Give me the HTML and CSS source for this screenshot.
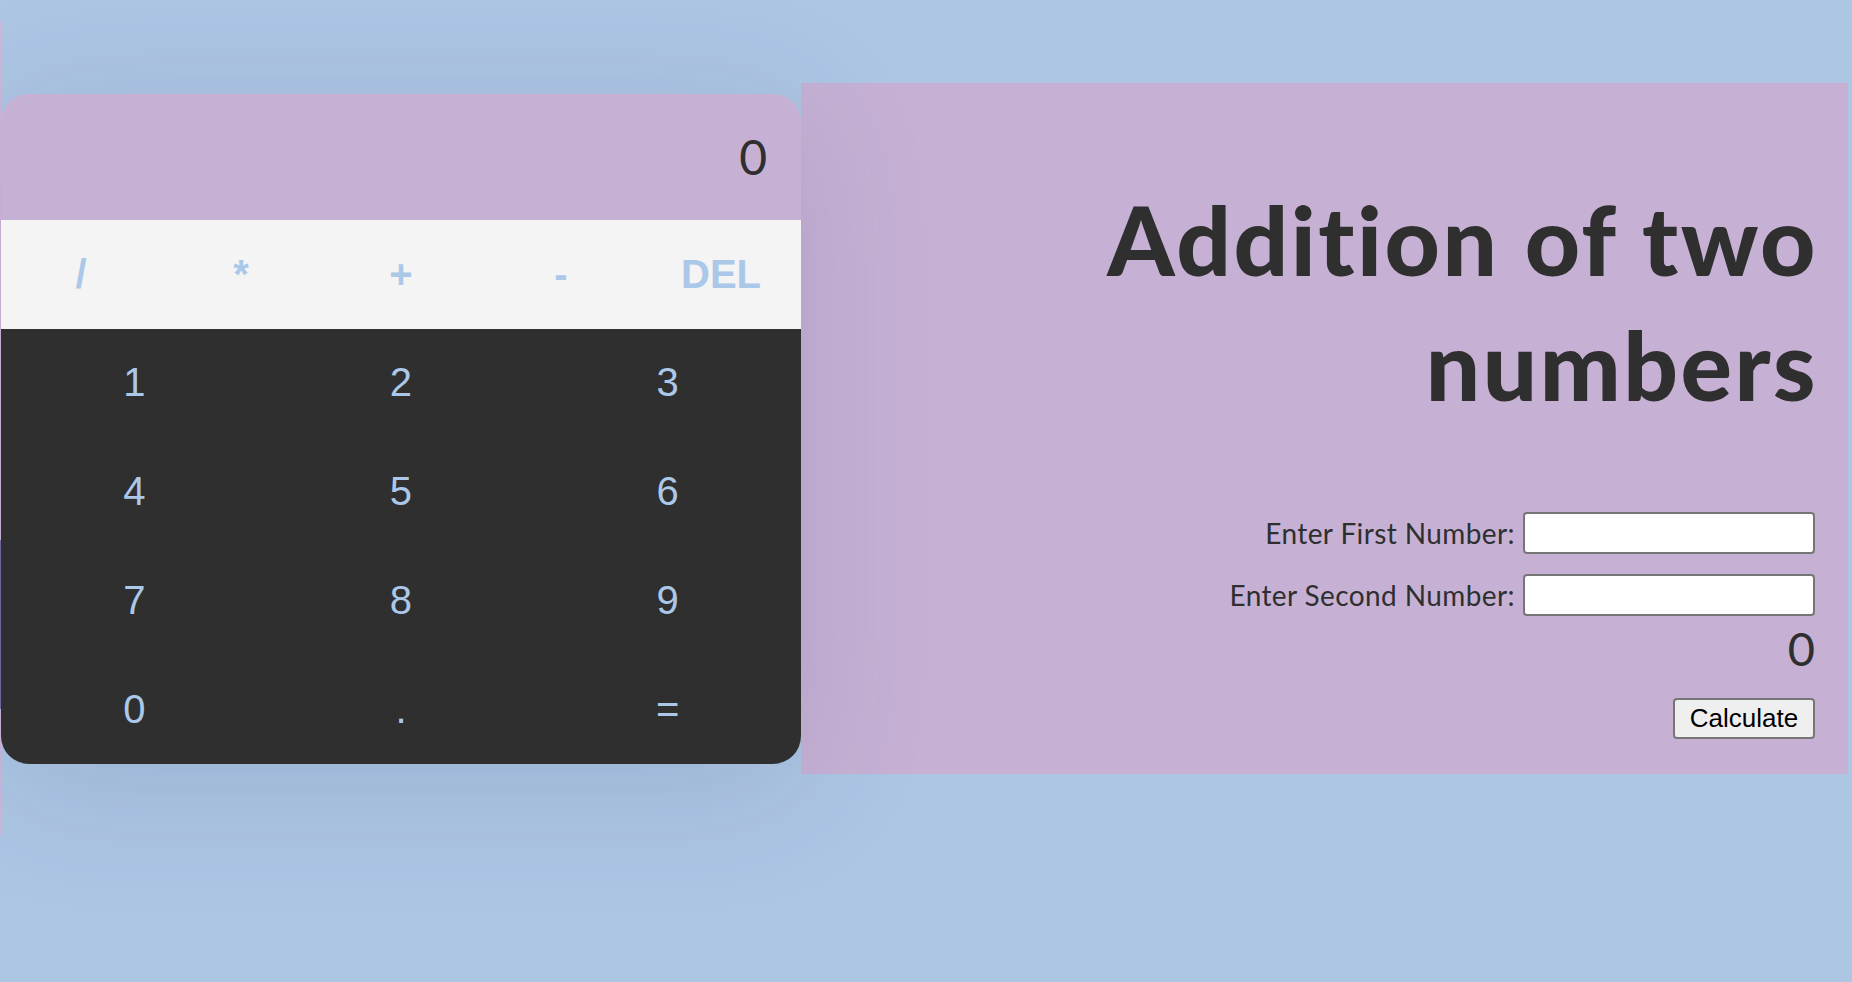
FILE: index.html
```html
<!DOCTYPE html>
<html lang="en">
<head>
<meta charset="utf-8">
<title>Calculator</title>
<link rel="stylesheet" href="styles.css">
</head>
<body>
<div class="edge"><span class="edge-band"></span></div>
<main class="page">
  <section class="calc">
    <div class="display">0</div>
    <div class="ops">
      <button class="op">/</button>
      <button class="op">*</button>
      <button class="op">+</button>
      <button class="op">-</button>
      <button class="op">DEL</button>
    </div>
    <div class="keys">
      <button class="key">1</button>
      <button class="key">2</button>
      <button class="key">3</button>
      <button class="key">4</button>
      <button class="key">5</button>
      <button class="key">6</button>
      <button class="key">7</button>
      <button class="key">8</button>
      <button class="key">9</button>
      <button class="key">0</button>
      <button class="key">.</button>
      <button class="key">=</button>
    </div>
  </section>
  <section class="panel">
    <h1 class="title">Addition of two<br>numbers</h1>
    <form class="adder">
      <div class="row">
        <label class="label" for="n1">Enter First Number:</label>
        <input class="field" id="n1" type="text">
      </div>
      <div class="row">
        <label class="label" for="n2">Enter Second Number:</label>
        <input class="field" id="n2" type="text">
      </div>
      <div class="result">0</div>
      <button class="calc-btn" type="button">Calculate</button>
    </form>
  </section>
</main>
</body>
</html>
```

FILE: styles.css
```css
* { box-sizing: border-box; }

html, body {
  margin: 0;
  padding: 0;
}

body {
  background: #adc6e4;
  min-height: 982px;
  position: relative;
  font-family: "Lato", "Liberation Sans", sans-serif;
  font-variant-ligatures: none;
  overflow: hidden;
}

.edge {
  position: absolute;
  left: 0;
  top: 21px;
  width: 1px;
  height: 813px;
  background: #d2b4da;
}

.edge-band {
  position: absolute;
  left: 0;
  top: 519px;
  width: 1px;
  height: 169px;
  background: #7469a6;
}

.page {
  display: flex;
  align-items: center;
  padding: 83px 4px 0 1px;
}

.calc {
  width: 800px;
  flex: none;
  border-radius: 28px;
  overflow: hidden;
  box-shadow: 0 20px 140px rgba(40, 60, 90, 0.14);
  position: relative;
  z-index: 1;
}

.display {
  height: 126px;
  background: #c6b1d5;
  display: flex;
  align-items: center;
  justify-content: flex-end;
  padding-right: 34px;
  font-family: "Lato", sans-serif;
  font-size: 48px;
  color: #2f2f2f;
}

.ops {
  height: 109px;
  background: #f4f4f4;
  display: grid;
  grid-template-columns: repeat(5, 1fr);
}

.op, .key {
  border: 0;
  background: transparent;
  padding: 0;
  margin: 0;
  font-family: "Liberation Sans", Arial, sans-serif;
  color: #abc8e8;
  font-size: 40px;
  cursor: pointer;
}

.op {
  font-weight: 700;
}

.keys {
  height: 435px;
  background: #2f2f2f;
  display: grid;
  grid-template-columns: repeat(3, 1fr);
  grid-template-rows: repeat(4, 1fr);
}

.panel {
  width: 1047px;
  height: 691px;
  flex: none;
  background: #c6b1d5;
  padding: 93px 33px 0 0;
  text-align: right;
}

.title {
  margin: 0 -3px 0 0;
  font-family: "Lato", sans-serif;
  font-weight: 900;
  font-size: 96px;
  line-height: 125px;
  letter-spacing: 2.5px;
  color: #2f2f2f;
}

.adder {
  display: flex;
  flex-direction: column;
  align-items: flex-end;
  margin-top: 86px;
}

.row {
  display: flex;
  align-items: center;
  gap: 8px;
  margin-bottom: 20px;
}

.label {
  font-family: "Lato", sans-serif;
  font-size: 28px;
  letter-spacing: 0.4px;
  color: #2f2f2f;
}

.field {
  width: 292px;
  height: 42px;
  border: 2px solid #767676;
  border-radius: 4px;
  background: #fff;
  font-size: 20px;
}

.result {
  font-family: "Lato", sans-serif;
  font-size: 47px;
  line-height: 46px;
  color: #2f2f2f;
  margin-top: -11px;
}

.calc-btn {
  margin-top: 27px;
  width: 142px;
  height: 41px;
  padding: 0;
  border: 2px solid #767676;
  border-radius: 4px;
  background: #efefef;
  font-family: "Liberation Sans", Arial, sans-serif;
  font-size: 26px;
  color: #000;
}
```
